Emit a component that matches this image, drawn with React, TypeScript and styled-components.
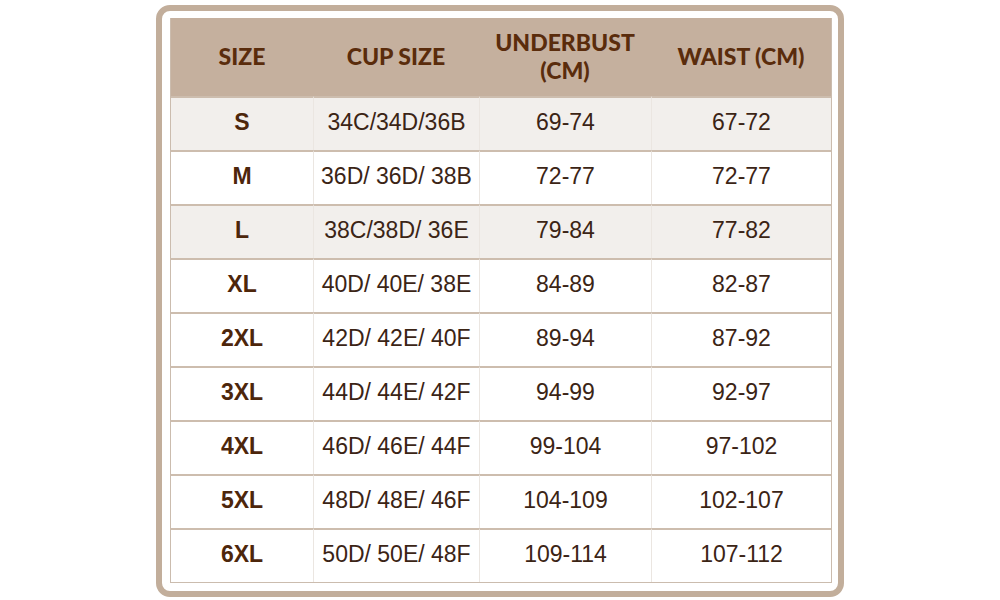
import React from "react";
import styled, { createGlobalStyle } from "styled-components";

const rows = [
  { size: "S", cup: "34C/34D/36B", under: "69-74", waist: "67-72", shade: true },
  { size: "M", cup: "36D/ 36D/ 38B", under: "72-77", waist: "72-77" },
  { size: "L", cup: "38C/38D/ 36E", under: "79-84", waist: "77-82", shade: true },
  { size: "XL", cup: "40D/ 40E/ 38E", under: "84-89", waist: "82-87" },
  { size: "2XL", cup: "42D/ 42E/ 40F", under: "89-94", waist: "87-92" },
  { size: "3XL", cup: "44D/ 44E/ 42F", under: "94-99", waist: "92-97" },
  { size: "4XL", cup: "46D/ 46E/ 44F", under: "99-104", waist: "97-102" },
  { size: "5XL", cup: "48D/ 48E/ 46F", under: "104-109", waist: "102-107" },
  { size: "6XL", cup: "50D/ 50E/ 48F", under: "109-114", waist: "107-112" },
];

const GlobalStyle = createGlobalStyle`
  html, body {
    margin: 0;
    padding: 0;
    background: #fff;
  }
`;

const Page = styled.div`
  width: 1000px;
  height: 600px;
  display: flex;
  justify-content: center;
  padding-top: 5px;
  box-sizing: border-box;
`;

const Frame = styled.div`
  width: 688px;
  height: 592px;
  box-sizing: border-box;
  border: 6px solid #c2ae9b;
  border-radius: 14px;
  padding: 7px 6px 8px 8px;
  background: #fff;
`;

const Table = styled.div`
  display: grid;
  grid-template-columns: 142px 166px 172px 1fr;
  grid-template-rows: 78px repeat(9, 54px);
  border: 1px solid #cbbcae;
  border-top: none;
`;

const HeadCell = styled.div`
  background: #c5b09e;
  display: flex;
  align-items: center;
  justify-content: center;
  text-align: center;
  font-family: Lato, "Noto Sans", sans-serif;
  font-weight: 900;
  font-size: 23px;
  line-height: 28px;
  color: #5a2c0c;
  padding-bottom: 2px;
`;

const Cell = styled.div<{ $shade?: boolean; $first?: boolean }>`
  background: ${(p) => (p.$shade ? "#f2efec" : "#fff")};
  border-top: 2px solid #cdbdae;
  border-left: ${(p) => (p.$first ? "none" : "1px solid #ebe6e1")};
  display: flex;
  align-items: center;
  justify-content: center;
  padding-bottom: 4px;
  font-family: "Liberation Sans", Arial, sans-serif;
  font-size: 23px;
  font-weight: ${(p) => (p.$first ? 700 : 400)};
  color: ${(p) => (p.$first ? "#4d260b" : "#3b2415")};
`;

export default function App() {
  return (
    <Page>
      <GlobalStyle />
      <Frame>
        <Table>
          <HeadCell>SIZE</HeadCell>
          <HeadCell>CUP SIZE</HeadCell>
          <HeadCell>
            UNDERBUST
            <br />
            (CM)
          </HeadCell>
          <HeadCell>WAIST (CM)</HeadCell>
          {rows.map((r) => (
            <React.Fragment key={r.size}>
              <Cell $shade={r.shade} $first>
                {r.size}
              </Cell>
              <Cell $shade={r.shade}>{r.cup}</Cell>
              <Cell $shade={r.shade}>{r.under}</Cell>
              <Cell $shade={r.shade}>{r.waist}</Cell>
            </React.Fragment>
          ))}
        </Table>
      </Frame>
    </Page>
  );
}
